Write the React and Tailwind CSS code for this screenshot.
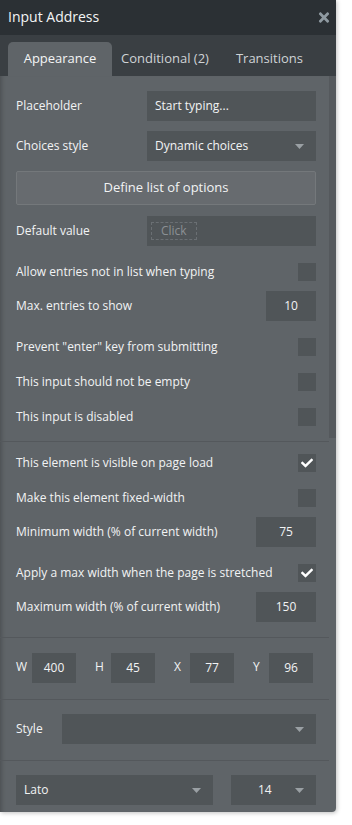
import React from "react";

const font = { fontFamily: '"Open Sans", "Liberation Sans", sans-serif' };

function Tri() {
  return (
    <svg width="9" height="5" viewBox="0 0 9 5" className="shrink-0">
      <path d="M0 0 L9 0 L4.5 5 Z" fill="#9aa0a4" />
    </svg>
  );
}

function Check() {
  return (
    <svg width="12" height="12" viewBox="0 0 512 512">
      <path
        fill="#ffffff"
        d="M173.898 439.404l-166.4-166.4c-9.997-9.997-9.997-26.206 0-36.204l36.203-36.204c9.997-9.998 26.207-9.998 36.204 0L192 312.69 432.095 72.596c9.997-9.997 26.207-9.997 36.204 0l36.203 36.204c9.997 9.997 9.997 26.206 0 36.204l-294.4 294.401c-9.998 9.997-26.207 9.997-36.204-.001z"
      />
    </svg>
  );
}

function Box({ checked }) {
  return (
    <div className="w-[18px] h-[18px] bg-[#505558] flex items-center justify-center shrink-0">
      {checked ? <Check /> : null}
    </div>
  );
}

function CheckRow({ label, checked, mt }) {
  return (
    <div className={`h-[30px] flex items-center justify-between ${mt}`}>
      <span>{label}</span>
      <Box checked={checked} />
    </div>
  );
}

function NumRow({ label, value, w, mt }) {
  return (
    <div className={`h-[30px] flex items-center justify-between ${mt}`}>
      <span>{label}</span>
      <div className={`${w} h-[30px] bg-[#505558] flex items-center justify-center`}>{value}</div>
    </div>
  );
}

function Sep() {
  return <div className="h-px bg-[#54585c]" />;
}

function Coord({ l, v }) {
  return (
    <div className="flex items-center">
      <span className="w-[16px] -mt-[2px]">{l}</span>
      <div className="w-[44px] h-[30px] bg-[#505558] flex items-center justify-center">{v}</div>
    </div>
  );
}

export default function App() {
  return (
    <div className="w-[352px] h-[825px] bg-white" style={font}>
      <div className="w-[336px] rounded-br-[4px] overflow-hidden shadow-[1px_1px_4px_rgba(0,0,0,0.25)] text-[12px] text-[#f2f3f4]">
        {/* header */}
        <div className="h-[35px] bg-[#2b3034] flex items-center justify-between pl-[8px] pr-[6px]">
          <span className="text-[14px] text-[#f4f5f6] -mt-[2px]">Input Address</span>
          <svg width="12" height="15" viewBox="0 0 352 512">
            <path
              fill="#8f9aa1"
              d="M242.72 256l100.07-100.07c12.28-12.28 12.28-32.19 0-44.48l-22.240-22.24c-12.28-12.28-32.19-12.28-44.48 0L176 189.28 75.93 89.21c-12.28-12.28-32.19-12.28-44.48 0L9.21 111.45c-12.28 12.28-12.28 32.19 0 44.48L109.28 256 9.21 356.07c-12.28 12.28-12.28 32.19 0 44.48l22.24 22.24c12.28 12.28 32.2 12.28 44.48 0L176 322.72l100.07 100.07c12.28 12.28 32.2 12.28 44.48 0l22.24-22.24c12.28-12.28 12.28-32.19 0-44.48L242.72 256z"
            />
          </svg>
        </div>
        {/* tabs */}
        <div className="h-[41px] bg-[#3a3f43] flex items-end pl-[8px] text-[13px]">
          <div className="w-[104px] h-[34px] bg-[#5f6468] rounded-t-[5px] flex items-center justify-center text-[#f4f5f6]">
            Appearance
          </div>
          <div className="h-[34px] flex items-center ml-[9px] text-[#cfd3d6]">Conditional (2)</div>
          <div className="h-[34px] flex items-center ml-[27px] text-[#cfd3d6]">Transitions</div>
        </div>
        {/* body */}
        <div className="flex bg-[#5f6468] shadow-[inset_5px_0_5px_-4px_rgba(0,0,0,0.25)]">
          <div className="w-[329px]">
            <div className="pl-[16px] pr-[13px] pt-[15px] pb-[9px]">
              <div className="h-[30px] flex items-center justify-between">
                <span>Placeholder</span>
                <div className="w-[169px] h-[30px] bg-[#505558] flex items-center px-[8px]">Start typing...</div>
              </div>
              <div className="h-[30px] flex items-center justify-between mt-[10px]">
                <span>Choices style</span>
                <div className="w-[169px] h-[30px] bg-[#505558] flex items-center justify-between pl-[8px] pr-[12px]">
                  <span>Dynamic choices</span>
                  <Tri />
                </div>
              </div>
              <div className="h-[34px] mt-[10px] bg-[#676b6f] border border-[#74787b] rounded-[2px] flex items-center justify-center text-[13px]">
                Define list of options
              </div>
              <div className="h-[30px] flex items-center justify-between mt-[11px]">
                <span>Default value</span>
                <div className="w-[169px] h-[30px] bg-[#505558] flex items-center px-[4px]">
                  <span className="border border-dashed border-[#6a6f73] px-[9px] h-[18px] flex items-center text-[#8b9094]">Click</span>
                </div>
              </div>
              <CheckRow label="Allow entries not in list when typing" mt="mt-[11px]" />
              <NumRow label="Max. entries to show" value="10" w="w-[50px]" mt="mt-[4px]" />
              <CheckRow label={'Prevent "enter" key from submitting'} mt="mt-[11px]" />
              <CheckRow label="This input should not be empty" mt="mt-[5px]" />
              <CheckRow label="This input is disabled" mt="mt-[5px]" />
            </div>
            <Sep />
            <div className="pl-[16px] pr-[13px] pt-[6px] pb-[15px]">
              <CheckRow label="This element is visible on page load" checked mt="" />
              <CheckRow label="Make this element fixed-width" mt="mt-[5px]" />
              <NumRow label="Minimum width (% of current width)" value="75" w="w-[60px]" mt="mt-[4px]" />
              <CheckRow label="Apply a max width when the page is stretched" checked mt="mt-[11px]" />
              <NumRow label="Maximum width (% of current width)" value="150" w="w-[60px]" mt="mt-[4px]" />
            </div>
            <Sep />
            <div className="pl-[16px] pr-[13px] pt-[15px] pb-[16px] flex gap-[19px]">
              <Coord l="W" v="400" />
              <Coord l="H" v="45" />
              <Coord l="X" v="77" />
              <Coord l="Y" v="96" />
            </div>
            <Sep />
            <div className="pl-[16px] pr-[13px] pt-[14px] pb-[16px] flex items-center">
              <span className="w-[46px]">Style</span>
              <div className="flex-1 h-[30px] bg-[#505558] flex items-center justify-end pr-[12px]">
                <Tri />
              </div>
            </div>
            <Sep />
            <div className="pl-[16px] pr-[13px] pt-[14px] pb-[7px] flex items-center justify-between">
              <div className="w-[197px] h-[30px] bg-[#505558] flex items-center justify-between pl-[8px] pr-[12px]">
                <span>Lato</span>
                <Tri />
              </div>
              <div className="w-[85px] h-[30px] bg-[#505558] flex items-center justify-between pl-[27px] pr-[12px]">
                <span>14</span>
                <Tri />
              </div>
            </div>
          </div>
          <div className="w-[7px]">
            <div className="h-[362px] bg-[#55595d]" />
          </div>
        </div>
      </div>
    </div>
  );
}
